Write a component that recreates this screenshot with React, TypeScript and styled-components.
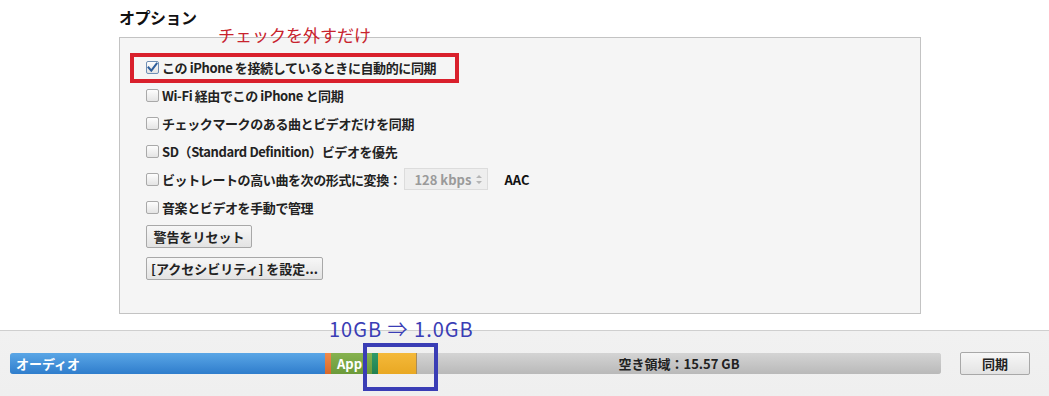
import React from "react";
import styled, { createGlobalStyle } from "styled-components";

const GlobalStyle = createGlobalStyle`
  html, body {
    margin: 0;
    padding: 0;
    background: #ffffff;
  }
  body {
    font-family: "Noto Sans CJK JP", "Noto Sans", sans-serif;
    color: #222;
  }
`;

const Page = styled.div`
  position: relative;
  width: 1049px;
  height: 396px;
  overflow: hidden;
  display: flex;
  flex-direction: column;
`;

const Options = styled.section`
  height: 330px;
  padding-left: 119px;
  box-sizing: border-box;
  background: #fff;
`;

const Heading = styled.h2`
  margin: 0;
  padding-top: 6px;
  height: 37px;
  box-sizing: border-box;
  font-size: 16px;
  font-weight: 700;
  line-height: 22px;
  color: #111;
  letter-spacing: -0.5px;
`;

const Panel = styled.div`
  width: 802px;
  height: 277px;
  box-sizing: border-box;
  background: #f5f5f5;
  border: 1px solid #c3c3c3;
  padding: 15px 0 0 26px;
  display: flex;
  flex-direction: column;
`;

const Row = styled.div<{ $marked?: boolean }>`
  position: relative;
  height: 28px;
  display: flex;
  align-items: center;
  gap: 3px;
  font-size: 13px;
  font-weight: 700;
  letter-spacing: -0.4px;
  color: #222;

  ${(p) =>
    p.$marked &&
    `
    &::after {
      content: "";
      position: absolute;
      left: -16px;
      top: 0;
      width: 329px;
      height: 30px;
      box-sizing: border-box;
      border: 4px solid #d9202c;
      pointer-events: none;
    }
  `}
`;

const Box = styled.span<{ $checked?: boolean }>`
  width: 13px;
  height: 13px;
  box-sizing: border-box;
  border: 1px solid ${(p) => (p.$checked ? "#6f8fb5" : "#a9a9a9")};
  border-radius: 2px;
  background: linear-gradient(#fdfdfd, #e4e4e4);
  display: flex;
  align-items: center;
  justify-content: center;
  flex: none;
`;

const Stepper = styled.div`
  width: 84px;
  height: 22px;
  box-sizing: border-box;
  border: 1px solid #dcdcdc;
  background: #eeeeee;
  color: #9a9a9a;
  font-size: 13px;
  font-weight: 700;
  letter-spacing: 0;
  display: flex;
  align-items: center;
  padding-left: 9px;
  gap: 5px;
`;

const Codec = styled.span`
  margin-left: 13px;
  color: #111;
  letter-spacing: 0;
`;

const Buttons = styled.div`
  display: flex;
  flex-direction: column;
  align-items: flex-start;
  gap: 9px;
  margin-top: 4px;
`;

const Button = styled.button<{ $width: number }>`
  width: ${(p) => p.$width}px;
  height: 23px;
  box-sizing: border-box;
  border: 1px solid #a8a8a8;
  border-radius: 2px;
  background: linear-gradient(#f7f7f7, #e3e3e3);
  font-family: inherit;
  font-size: 13px;
  font-weight: 700;
  color: #222;
  padding: 0;
  line-height: 21px;
  cursor: pointer;
`;

const Footer = styled.footer`
  flex: 1;
  border-top: 1px solid #cfcfcf;
  background: linear-gradient(#f1f1f1, #efefef);
  display: flex;
  align-items: flex-start;
  padding: 22px 0 0 10px;
  gap: 19px;
`;

const Bar = styled.div`
  width: 931px;
  height: 21px;
  display: flex;
  border-radius: 3px;
  overflow: hidden;
  box-shadow: inset 0 0 0 1px rgba(0, 0, 0, 0.15);
`;

const Segment = styled.div<{ $color: string; $dark: string }>`
  height: 100%;
  background: linear-gradient(${(p) => p.$color}, ${(p) => p.$dark});
  color: #fff;
  font-size: 13px;
  font-weight: 700;
  display: flex;
  align-items: center;
  box-sizing: border-box;
  flex: none;
  white-space: nowrap;
  overflow: hidden;
`;

const Free = styled(Segment)`
  flex: 1;
  justify-content: center;
  color: #222;
  border-left: 1px solid #a88c5c;
`;

const SyncButton = styled(Button)`
  margin-top: -1px;
`;

const Note = styled.div<{ $color: string; $size: number; $spacing?: number }>`
  position: absolute;
  color: ${(p) => p.$color};
  font-size: ${(p) => p.$size}px;
  letter-spacing: ${(p) => p.$spacing ?? 0}px;
  font-weight: 400;
  line-height: 1;
  white-space: nowrap;
  font-family: "Noto Sans CJK JP", "DejaVu Sans", sans-serif;
`;

const Frame = styled.div`
  position: absolute;
  left: 363px;
  top: 343px;
  width: 75px;
  height: 48px;
  box-sizing: border-box;
  border: 4px solid #3a3db5;
`;

const Check = () => (
  <svg width="11" height="11" viewBox="0 0 11 11">
    <path
      d="M1.5 5.5 L4.3 8.6 L9.6 1.6"
      fill="none"
      stroke="#2f5f9c"
      strokeWidth="2"
      strokeLinecap="square"
    />
  </svg>
);

const Arrows = () => (
  <svg width="6" height="11" viewBox="0 0 6 11">
    <path d="M0 4 L3 1 L6 4 Z M0 7 L3 10 L6 7 Z" fill="#b5b5b5" />
  </svg>
);

const options = [
  { label: "この iPhone を接続しているときに自動的に同期", checked: true },
  { label: "Wi-Fi 経由でこの iPhone と同期" },
  { label: "チェックマークのある曲とビデオだけを同期" },
  { label: "SD（Standard Definition）ビデオを優先" },
];

export default function App() {
  return (
    <Page>
      <GlobalStyle />
      <Options>
        <Heading>オプション</Heading>
        <Panel>
          {options.map((o) => (
            <Row key={o.label} $marked={o.checked}>
              <Box $checked={o.checked}>{o.checked && <Check />}</Box>
              {o.label}
            </Row>
          ))}
          <Row>
            <Box />
            ビットレートの高い曲を次の形式に変換：
            <Stepper>
              128 kbps <Arrows />
            </Stepper>
            <Codec>AAC</Codec>
          </Row>
          <Row>
            <Box />
            音楽とビデオを手動で管理
          </Row>
          <Buttons>
            <Button $width={106}>警告をリセット</Button>
            <Button $width={177}>[アクセシビリティ] を設定...</Button>
          </Buttons>
        </Panel>
      </Options>
      <Footer>
        <Bar>
          <Segment $color="#5aa6e6" $dark="#2f7dcc" style={{ width: 315, paddingLeft: 6 }}>
            オーディオ
          </Segment>
          <Segment $color="#f08a4a" $dark="#d8692b" style={{ width: 6 }} />
          <Segment $color="#86b24f" $dark="#6b9a3a" style={{ width: 41, paddingLeft: 6 }}>
            App
          </Segment>
          <Segment $color="#2f9a68" $dark="#22804f" style={{ width: 6 }} />
          <Segment $color="#f4b93a" $dark="#e9a823" style={{ width: 38 }} />
          <Free $color="#d4d4d4" $dark="#b9b9b9">空き領域：15.57 GB</Free>
        </Bar>
        <SyncButton $width={70}>同期</SyncButton>
      </Footer>

      <Note $color="#c8232d" $size={17} style={{ left: 218, top: 26 }}>
        チェックを外すだけ
      </Note>
      <Note $color="#3a3db5" $size={20} $spacing={1} style={{ left: 329, top: 319 }}>
        10GB ⇒ 1.0GB
      </Note>
      <Frame />
    </Page>
  );
}
